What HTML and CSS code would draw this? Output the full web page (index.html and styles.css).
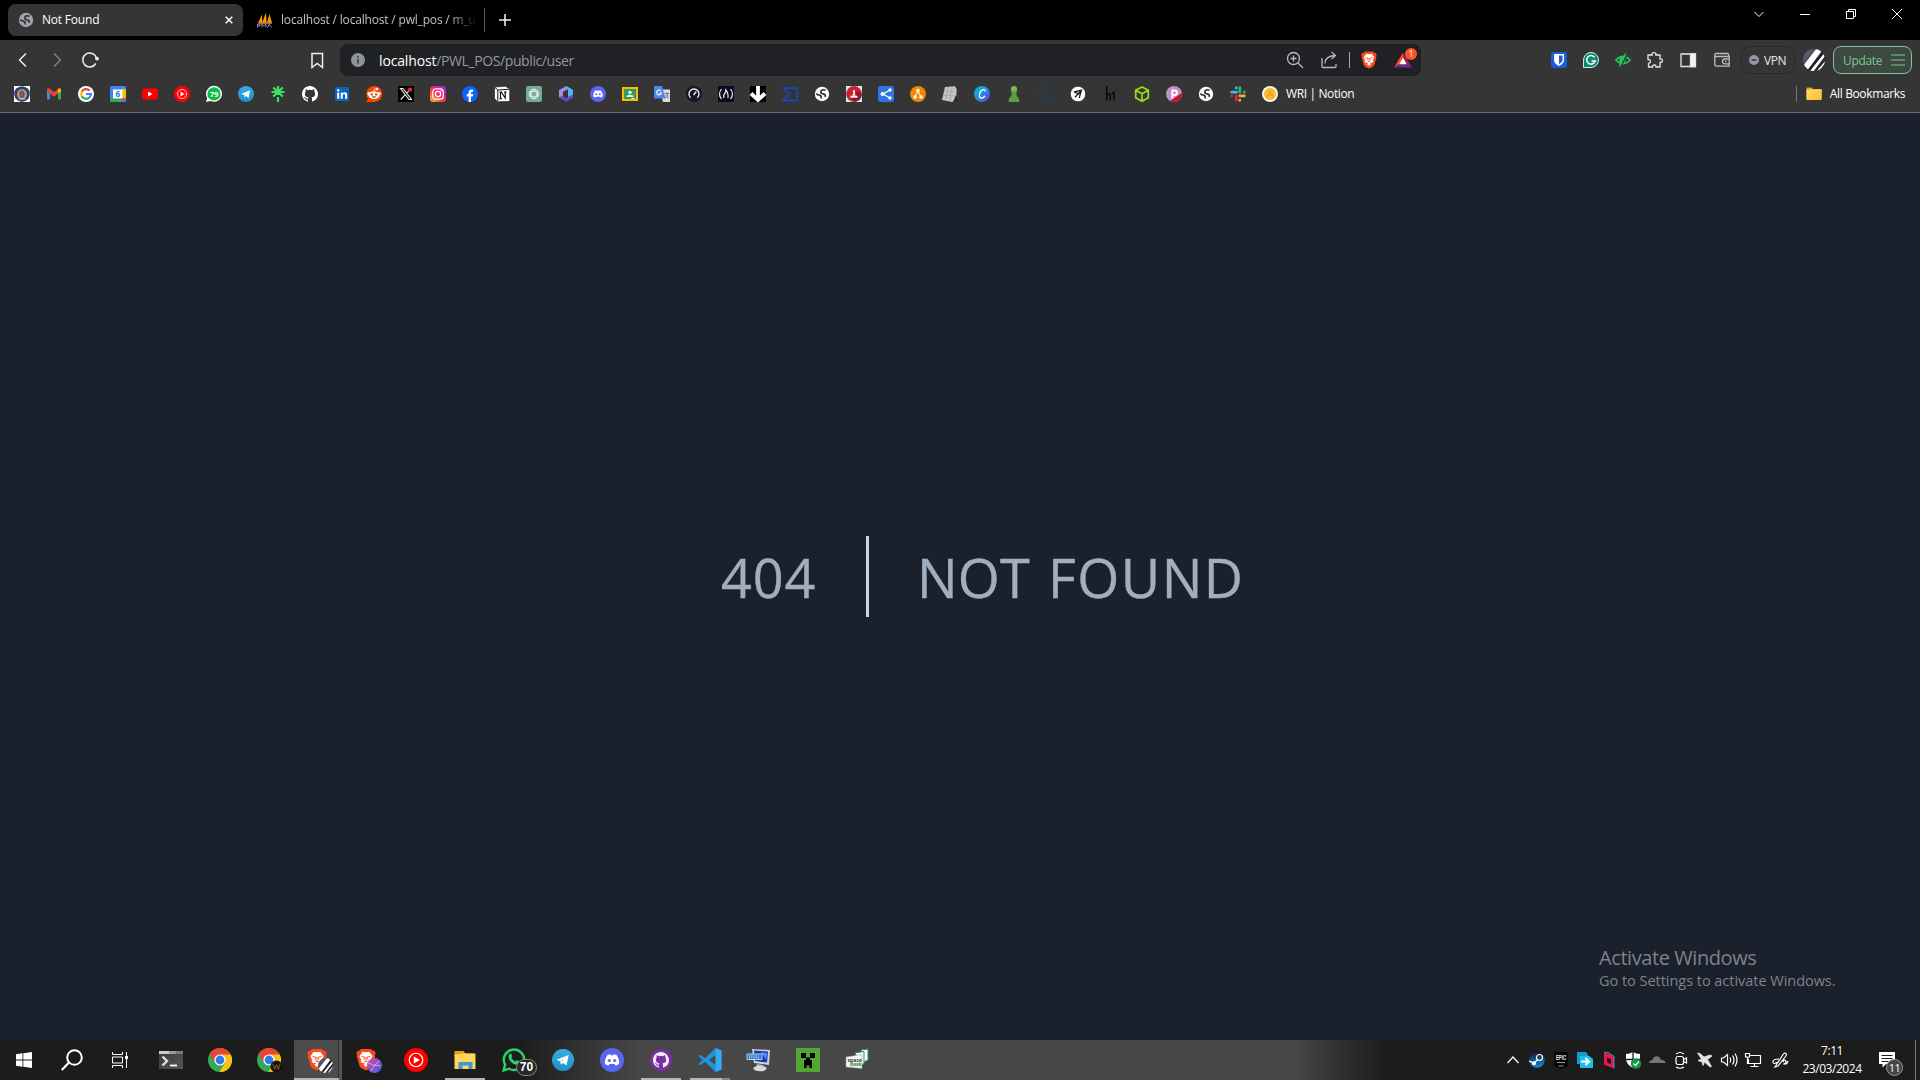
FILE: index.html
```html
<!DOCTYPE html>
<html lang="en">
<head>
<meta charset="utf-8">
<title>Not Found</title>
<link rel="stylesheet" href="styles.css">
</head>
<body>
<svg class="defs" aria-hidden="true">
  <defs>
    <linearGradient id="ig" x1="0" y1="1" x2="1" y2="0"><stop offset="0" stop-color="#fec93a"/><stop offset=".35" stop-color="#f9502f"/><stop offset=".65" stop-color="#e51a98"/><stop offset="1" stop-color="#8a2be8"/></linearGradient>
    <linearGradient id="canva" x1="0" y1="0" x2="1" y2="1"><stop offset="0" stop-color="#00c4cc"/><stop offset=".5" stop-color="#1c8fe0"/><stop offset="1" stop-color="#7d2ae8"/></linearGradient>
    <linearGradient id="folder" x1="0" y1="0" x2="1" y2="1"><stop offset="0" stop-color="#ffdc6b"/><stop offset="1" stop-color="#fbc02d"/></linearGradient>
    <linearGradient id="steam" x1="0" y1="0" x2="0" y2="1"><stop offset="0" stop-color="#101d3a"/><stop offset="1" stop-color="#1a8fd0"/></linearGradient>
    <linearGradient id="tgram" x1="0" y1="0" x2="0" y2="1"><stop offset="0" stop-color="#38aee3"/><stop offset="1" stop-color="#1e8fca"/></linearGradient>
    <linearGradient id="avatar" x1="0" y1="0" x2="1" y2="1"><stop offset="0" stop-color="#6b6f85"/><stop offset="1" stop-color="#101010"/></linearGradient>
    <linearGradient id="orb" x1="0" y1="0" x2="1" y2="1"><stop offset="0" stop-color="#e040a0"/><stop offset="1" stop-color="#3b62e8"/></linearGradient>
    <linearGradient id="term" x1="0" y1="0" x2="1" y2="1"><stop offset="0" stop-color="#3a3a3a"/><stop offset="1" stop-color="#555"/></linearGradient>
  </defs>
  <symbol id="globe" viewBox="0 0 16 16"><circle cx="8" cy="8" r="7.200" fill="currentColor"/><path class="cut" d="M11.500 4.200Q7.200 3.200 6.800 5.300T10.300 8.300Q11.800 9 11 10.800M2.200 7.600Q3.600 9 5.500 9.200T7.300 12.500"/></symbol>
  <symbol id="youtube-music" viewBox="0 0 16 16"><circle cx="8" cy="8" r="8" fill="#f00"/><circle cx="8" cy="8" r="4.500" fill="none" stroke="#fff" stroke-width=".8"/><path d="M6.500 5.600v4.800L10.600 8z" fill="#fff"/></symbol>
  <symbol id="telegram" viewBox="0 0 16 16"><circle cx="8" cy="8" r="8" fill="url(#tgram)"/><path d="M3.200 7.900l8.900-3.600-1.500 7.700-2.600-1.900-1.500 1.400-.5-2.600z" fill="#fff"/><path d="M6 8.900l4-2.900-3.100 3.500-.4 2z" fill="#b5d8ec"/></symbol>
  <symbol id="discord" viewBox="0 0 16 16"><circle cx="8" cy="8" r="8" fill="#5865f2"/><path d="M4.800 4.900c1-.6 1.700-.7 2-.7l.4.6h1.600l.4-.6c.4 0 1.100.1 2 .7 1.300 1.900 1.700 3.900 1.500 5.700-.8.6-1.600.9-2.400 1l-.6-.9H6.300l-.6.900c-.9-.1-1.700-.5-2.400-1-.2-1.800.2-3.700 1.500-5.700z" fill="#fff"/><circle cx="6.200" cy="8.300" r="1.050" fill="#5865f2"/><circle cx="9.800" cy="8.300" r="1.050" fill="#5865f2"/></symbol>
  <symbol id="octocat" viewBox="0 0 16 16"><path fill="currentColor" d="M8 0C3.580 0 0 3.580 0 8c0 3.540 2.290 6.530 5.470 7.590.4.070.55-.17.55-.38 0-.19-.01-.82-.01-1.490-2.010.37-2.530-.49-2.690-.94-.09-.23-.48-.94-.82-1.130-.28-.15-.68-.52-.01-.53.630-.01 1.080.58 1.230.82.720 1.210 1.870.87 2.330.66.070-.52.280-.87.510-1.070-1.780-.2-3.640-.89-3.640-3.950 0-.87.310-1.590.820-2.150-.08-.2-.36-1.020.080-2.120 0 0 .670-.21 2.200.82a7.600 7.600 0 0 1 4 0c1.530-1.040 2.200-.82 2.200-.82.440 1.100.160 1.920.080 2.120.510.560.820 1.270.820 2.150 0 3.070-1.870 3.750-3.650 3.950.290.250.540.730.540 1.480 0 1.070-.01 1.930-.01 2.200 0 .210.150.460.550.380A8 8 0 0 0 8 0z"/></symbol>
  <symbol id="brave" viewBox="0 0 16 18"><path d="M4 .5h8l1.200 1.400 1.300-.1 1.300 2-.7 1.400.3 1.400-2.200 7.300c-.3 1-1 1.600-1.800 2.100L8 17.800l-3.400-1.800c-.8-.5-1.500-1.100-1.800-2.100L.600 6.600l.3-1.400-.7-1.400 1.300-2 1.300.1z" fill="#fb4a1c"/><path d="M8 3.200l2.600-.4 2.700 3.500-1.500 2.800.6 1.300-1.400 1.600-1.600-.5-.3.700 1 1L8 15l-2.100-1.800 1-1-.3-.7-1.600.5-1.400-1.600.6-1.300-1.500-2.800 2.700-3.500z" fill="#fff"/><path d="M4.400 6.500l2.500.6-.4 2M11.600 6.500l-2.500.6.4 2M8 7v3.500M6.800 10.600h2.400" fill="none" stroke="#fb542b" stroke-width=".8"/></symbol>
  <symbol id="chrome" viewBox="0 0 24 24"><circle cx="12" cy="12" r="12" fill="#34a853"/><path d="M12 12L1.600 6A12 12 0 0 1 22.400 6z" fill="#ea4335"/><path d="M12 6.400h10.600A12 12 0 0 1 11.500 24l5.600-9z" fill="#fbc116"/><path d="M1.600 6l5.500 9L12 6.400z" fill="#ea4335"/><circle cx="12" cy="12" r="5.600" fill="#fff"/><circle cx="12" cy="12" r="4.400" fill="#2b7de9"/></symbol>
  <symbol id="stripes" viewBox="0 0 22 22"><clipPath id="disc"><circle cx="11" cy="11" r="11"/></clipPath><g clip-path="url(#disc)"><path fill="url(#avatar)" d="M0 0h22v22H0z"/><path d="M0 17L14-1h7L4 22zM7 23L22 4v3L10 23zM12 24L23 11v2L15 24z" fill="#fff"/><path d="M4 22L20 1h3L8 22z" fill="#222"/><path d="M7 22L23 2v3L10 22z" fill="#fff"/></g></symbol>
</svg>

<div class="desktop">
  <header class="tabstrip">
    <div class="tab tab-active">
      <svg class="i16 muted"><use href="#globe"/></svg>
      <span class="tab-title">Not Found</span>
      <svg class="tab-close" viewBox="0 0 8 8"><path d="M.7.7l6.600 6.600M7.300.7L.7 7.300"/></svg>
    </div>
    <div class="tab tab-idle">
      <svg class="i16" viewBox="0 0 16 16"><path d="M1 11L5 2.500l.3 8.500zM5 11L9 .5l.7 10.500zM10 11l2.500-9 2.500 9z" fill="#f89c0e"/><path d="M.5 10.500h15l-1 1.500H2z" fill="#a96a38"/><path d="M.5 15.500v-3.500h2.500v2H1M5 15.500V12l2 2 2-2v3.500M10.500 15.500l1.800-3.500 2 3.500" fill="none" stroke="#8c90ad" stroke-width="1"/></svg>
      <span class="tab-title">localhost / localhost / pwl_pos / m_u</span>
    </div>
    <span class="tab-sep"></span>
    <svg class="new-tab" viewBox="0 0 12 12"><path d="M6 0v12M0 6h12"/></svg>
    <div class="window-controls">
      <svg class="wc" viewBox="0 0 46 28"><path d="M18.500 12l4.500 4.500 4.500-4.500"/></svg>
      <svg class="wc" viewBox="0 0 46 28"><path d="M18 14.500h10"/></svg>
      <svg class="wc" viewBox="0 0 46 28"><path d="M18.500 11.500h7v7h-7zM20.500 11.500v-2h7v7h-2"/></svg>
      <svg class="wc" viewBox="0 0 46 28"><path d="M18 9l10 10M28 9L18 19"/></svg>
    </div>
  </header>

  <div class="toolbar">
    <div class="nav-buttons">
      <svg class="nav" viewBox="0 0 34 32"><path d="M20 9.500L13.500 16l6.500 6.500"/></svg>
      <svg class="nav dim" viewBox="0 0 34 32"><path d="M14 9.500l6.500 6.500L14 22.500"/></svg>
      <svg class="nav" viewBox="0 0 34 32"><path d="M21.800 19.500A7 7 0 1 1 22.500 14"/><circle cx="23" cy="14.600" r="1.900" fill="#f0f0f0" stroke="none"/></svg>
    </div>
    <svg class="nav bookmark-btn" viewBox="0 0 34 32"><path d="M12 9.500h10.500v14L17.200 19.500 12 23.500z"/></svg>
    <div class="omnibox">
      <svg class="info" viewBox="0 0 14 14"><circle cx="7" cy="7" r="7" fill="#8f9399"/><path d="M7 6v4.500M7 3.200v1.600" stroke="#35373b" stroke-width="1.600"/></svg>
      <p class="url"><b>localhost</b>/PWL_POS/public/user</p>
      <svg class="ob" viewBox="0 0 34 32"><circle cx="15.500" cy="14.500" r="6"/><path d="M15.500 11.500v6M12.500 14.500h6M20 19l5 5"/></svg>
      <svg class="ob" viewBox="0 0 34 32"><path d="M10 14v8.500q0 1 1 1h12q1 0 1-1V20M13 19.500q0-7.500 10-8M19.500 8l4 3.500-4 3.500"/></svg>
      <span class="ob-sep"></span>
      <svg class="ob-brave"><use href="#brave"/></svg>
      <div class="bat">
        <svg viewBox="0 0 18 16"><path d="M9 .5L0 15.500l6-3.500 3-6z" fill="#ff4724"/><path d="M0 15.500h18L12.500 12H6z" fill="#662d91"/><path d="M9 .5l9 15-5.500-3.500L9 6z" fill="#9e1f63"/><path d="M9 5.500l3.800 6.800H5.200z" fill="#fff"/></svg>
        <span class="bat-badge">1</span>
      </div>
    </div>
    <div class="extensions">
      <svg class="i16" viewBox="0 0 16 16"><rect width="16" height="16" rx="2" fill="#175ddc"/><path d="M3 2h10v6q0 3.500-5 6-5-2.500-5-6z" fill="#fff"/><path d="M8 3.500h3.600V8q0 2.200-3.600 4.300z" fill="#175ddc"/></svg>
      <svg class="i16" viewBox="0 0 16 16"><path d="M.5 15.500V8a7.500 7.500 0 1 1 7.500 7.500z" fill="#0b8a73" stroke="#d7e6e2"/><path d="M11.500 5.200A4.300 4.300 0 1 0 12.200 9H8.500" fill="none" stroke="#fff" stroke-width="1.500"/></svg>
      <svg class="i16" viewBox="0 0 16 16"><path d="M.8 8Q8 .5 15.200 8 8 15.500.8 8z" fill="#353535" stroke="#1fc95b" stroke-width="1.500"/><circle cx="7.500" cy="8" r="3.200" fill="#1fc95b"/><path d="M12 2L6 14.500" stroke="#353535" stroke-width="1.500"/><path d="M10.800 1.500L4.300 14.500" stroke="#1fc95b" stroke-width="1.500"/></svg>
      <svg class="i16 line" viewBox="0 0 16 16"><path d="M1 3h4.200q-.7-2.400 1.800-2.400T8.800 3H13v4q2.400-.4 2.400 1.700T13 10.400v4.600H9q.3-2-1.700-2t-1.700 2H1.500v-3.700q2-.2 2-1.900T1 7.400z"/></svg>
      <svg class="i16 line panel-icon" viewBox="0 0 16 16"><path d="M1 2h14v12.500H1z"/><path d="M10.500 2h5v12.500h-5z" fill="#f4f4f4"/></svg>
      <svg class="i16 line wallet-icon" viewBox="0 0 16 16"><path d="M14.500 5V2.500q0-1-1-1H2Q.8 1.500.8 3T2 4.500h13.200v9.700H2.500Q.8 14.200.8 12V3M15.200 7h-4.500q-2.200 0-2.200 2.400t2.200 2.400h4.500M11 9.500h1.500"/></svg>
      <span class="vpn"><i></i>VPN</span>
      <svg class="avatar"><use href="#stripes"/></svg>
      <span class="update">Update<svg viewBox="0 0 14 12"><path d="M0 1h14M0 6h14M0 11h14"/></svg></span>
    </div>
  </div>

  <nav class="bookmarks">
    <svg class="i16" viewBox="0 0 16 16"><path fill="#fff" d="M0 0h16v16H0z"/><path d="M8 .2l3 .8 3 1.400 1.800 3.300-.2 3.500-1 3-2.600 2.600L8 16l-4-1.200-2.600-2.600-1-3-.2-3.500L2 2.400 5 1z" fill="#29417e"/><circle cx="8" cy="8.200" r="5" fill="#d59a48"/><path d="M8 4l2.800 3-.8 4.500H6L5.200 7z" fill="#35589c"/><path d="M8 5.500l1 3-1 2.500-1-2.500z" fill="#e7542b"/><path d="M4.500 13h7" stroke="#e9d7b0"/></svg>
    <svg class="i16" viewBox="0 0 16 16"><path d="M1 3.500v10h3V7.700z" fill="#4285f4"/><path d="M15 3.500v10h-3V7.700z" fill="#34a853"/><path d="M1 3.500Q2 1.500 4 3l4 3.300L12 3v4.500L8 10.700l-4-3.200-3-2z" fill="#ea4335"/><path d="M12 3q2-1.500 3 .500v2l-3 2z" fill="#fbbc04"/></svg>
    <svg class="i16" viewBox="0 0 16 16"><circle cx="8" cy="8" r="8" fill="#fff"/><g fill="none" stroke-width="2.200"><path d="M11.600 4.600A5 5 0 0 0 3.700 5.700" stroke="#ea4335"/><path d="M3.700 5.700a5 5 0 0 0 0 4.600" stroke="#fbbc04"/><path d="M3.700 10.300a5 5 0 0 0 7.600 1.300" stroke="#34a853"/><path d="M11.300 11.600A5 5 0 0 0 13 8H8" stroke="#4285f4"/></g></svg>
    <svg class="i16" viewBox="0 0 16 16"><rect width="16" height="16" rx="1.500" fill="#4285f4"/><path d="M12 3h4v9h-4z" fill="#fbbc04"/><path d="M0 12.500h12V16H1.500Q0 16 0 14.500z" fill="#34a853"/><path d="M12 12h4l-4 4z" fill="#ea4335"/><path d="M3 3.500h9.500v9H3z" fill="#fff"/><text x="7.800" y="11.300" class="g-cal">6</text></svg>
    <svg class="i16" viewBox="0 0 16 16"><rect y="2.500" width="16" height="11" rx="2.800" fill="#f00"/><path d="M6.200 5.600v4.800L10.500 8z" fill="#fff"/></svg>
    <svg class="i16"><use href="#youtube-music"/></svg>
    <svg class="i16" viewBox="0 0 16 16"><path d="M0 16l1.200-4A8 8 0 1 1 4.500 15z" fill="#fff"/><circle cx="8" cy="7.900" r="6.600" fill="#0cbc46"/><text x="8" y="10.700" class="g-wa">79</text></svg>
    <svg class="i16"><use href="#telegram"/></svg>
    <svg class="i16" viewBox="0 0 16 16"><path d="M8 0v9M1.500 6h13M3.300 1.500l9.400 9M12.700 1.500l-9.400 9M8 11v5" stroke="#3fe25c" stroke-width="2.200"/></svg>
    <svg class="i16 white"><use href="#octocat"/></svg>
    <svg class="i16" viewBox="0 0 16 16"><rect x="1" y="1" width="14" height="14" rx=".5" fill="#0a66c2"/><path d="M3.200 6.500h2v6.300h-2zM6.700 6.500h2v.9q.8-1.100 2.200-1.100 2.200 0 2.200 2.800v3.700h-2V9.500q0-1.500-1-1.500-1.400 0-1.400 1.700v3.100h-2z" fill="#fff"/><circle cx="4.200" cy="4.300" r="1.200" fill="#fff"/></svg>
    <svg class="i16" viewBox="0 0 16 16"><path d="M0 16l2-3a8 8 0 1 1 6 3z" fill="#ff4500"/><ellipse cx="8" cy="9.200" rx="5.400" ry="3.900" fill="#fff"/><circle cx="2.900" cy="7.600" r="1.500" fill="#fff"/><circle cx="13.100" cy="7.600" r="1.500" fill="#fff"/><circle cx="11" cy="3" r="1.200" fill="#fff"/><path d="M8 5.500L8.600 3h2" stroke="#fff" fill="none" stroke-width=".8"/><circle cx="5.800" cy="8.500" r="1.200" fill="#ff4500"/><circle cx="10.200" cy="8.500" r="1.200" fill="#ff4500"/><path d="M5.500 10.600q2.500 2.200 5 0z" fill="#222"/></svg>
    <svg class="i16" viewBox="0 0 16 16"><path d="M0 0h16v16H0z"/><path d="M2.500 2.500H5l8.500 11H11zM13 2.500L8.800 7.200M7.200 8.900l-4.500 4.600" fill="none" stroke="#eee" stroke-width="1.100"/><circle cx="12" cy="3.600" r="2.200" fill="#f31d2d"/></svg>
    <svg class="i16" viewBox="0 0 16 16"><rect width="16" height="16" rx="3.500" fill="url(#ig)"/><rect x="2.800" y="2.800" width="10.400" height="10.400" rx="3" fill="none" stroke="#fff" stroke-width="1.200"/><circle cx="8" cy="8" r="2.600" fill="none" stroke="#fff" stroke-width="1.200"/><circle cx="11" cy="5" r=".7" fill="#fff"/></svg>
    <svg class="i16" viewBox="0 0 16 16"><circle cx="8" cy="8" r="8" fill="#0866ff"/><path d="M6.600 16v-5.500H4.800V8h1.800V6.700q0-3.300 3.100-3.300l1.500.2v2.100h-1q-1.200 0-1.200 1.200V8h2.200l-.4 2.500H9V16z" fill="#fff"/></svg>
    <svg class="i16" viewBox="0 0 16 16"><path d="M.5 1l11-.7 4.200 2.700v11.500l-1 1-11.200.3L.5 12.500z" fill="#fff" stroke="#111" stroke-width=".6"/><path d="M3.800 4l11.200-.7M3.800 4v11M1 1.500L3.800 4" stroke="#111" fill="none"/><path d="M5.500 6h1.800l3.900 6V6.200M10 6h2.800M6.500 6v6.600M5.500 12.700h2.300M11.200 6v6.500" stroke="#111" stroke-width="1.200" fill="none"/></svg>
    <svg class="i16" viewBox="0 0 16 16"><rect width="16" height="16" rx="2" fill="#74aa9c"/><g fill="none" stroke="#fff" stroke-width=".7"><rect x="3" y="5.300" width="10" height="5.400" rx="2.700"/><rect x="3" y="5.300" width="10" height="5.400" rx="2.700" transform="rotate(60 8 8)"/><rect x="3" y="5.300" width="10" height="5.400" rx="2.700" transform="rotate(120 8 8)"/></g></svg>
    <svg class="i16" viewBox="0 0 16 16"><path d="M8.500 0L1 4v7l4 2.500V6L10 3.200z" fill="#a78be8"/><path d="M8.500 0L15 4v6l-5 2V5L6.500 3.500z" fill="#52b4e8"/><path d="M1 11l7 4.800 7-4V8.500L8.500 12 5 10z" fill="#5a4fc8"/><path d="M5 6l5-2.500V10l-3.300 1.500L5 10z" fill="#353535"/></svg>
    <svg class="i16"><use href="#discord"/></svg>
    <svg class="i16" viewBox="0 0 16 16"><path d="M0 1h16v14H0z" fill="#fbbc04"/><path d="M2 3h12v10H2z" fill="#2f9e5b"/><circle cx="8" cy="6.300" r="1.600" fill="#fff"/><path d="M4.500 11q0-2.300 3.500-2.300t3.500 2.300zM9.500 13h3v-1h-3z" fill="#e8f5ec"/></svg>
    <svg class="i16" viewBox="0 0 16 16"><path d="M6 3.500h10V16H9z" fill="#d8dade"/><path d="M0 0h8l3.500 12.500H1Q0 12.500 0 11.500z" fill="#4a87ee"/><path d="M6.800 4.800A2.400 2.400 0 1 0 7.400 7H5.200" fill="none" stroke="#fff" stroke-width="1.100"/><path d="M10.500 7.500h4.500M12.500 6.300v1.200M14 7.500q-.8 3-3 4.500M11.800 9q1 2 3 3" fill="none" stroke="#68717d" stroke-width=".9"/></svg>
    <svg class="i16" viewBox="0 0 16 16"><circle cx="8" cy="8" r="8" fill="#141526"/><path d="M4.700 11.800a5 5 0 1 1 6.600 0M7.500 9l2.800-3.500" fill="none" stroke="#eee" stroke-width="1.400"/></svg>
    <svg class="i16" viewBox="0 0 16 16"><path d="M0 0h16v16H0z" fill="#0a0a23"/><path d="M3.500 3q-4 5 0 10M12.500 3q4 5 0 10M6 12q-1-3 1-5 1-1.200.8-3 2.700 3 2.200 8" fill="none" stroke="#e8e8ef" stroke-width="1.200"/></svg>
    <svg class="i16" viewBox="0 0 16 16"><path d="M0 0h16v16H0z"/><path d="M8 0v12M1 7.500l7 6.500 7-6.500" stroke="#fff" stroke-width="3.800" fill="none"/></svg>
    <svg class="i16" viewBox="0 0 16 16"><path d="M1 2h14v12.500H1L7.500 8.200z" fill="none" stroke="#0b4ddb" stroke-width="1.300"/></svg>
    <svg class="i16 white"><use href="#globe"/></svg>
    <svg class="i16" viewBox="0 0 16 16"><path d="M0 0h16v16H0z" fill="#c9f0ee"/><circle cx="8" cy="8" r="7.900" fill="#cf2032"/><path d="M5 12l3.500 3.800Q15 15 15.800 8.500L12 5z" fill="#941523"/><path d="M7.200 4h1.600v3.500l.7 2h-3l.7-2zM4.500 9.800h7v1.900h-7z" fill="#fff"/></svg>
    <svg class="i16" viewBox="0 0 16 16"><rect width="16" height="16" rx="2.500" fill="#2f74e8"/><path d="M12 4L5 8l7 4" fill="none" stroke="#fff" stroke-width="1.200"/><circle cx="4.500" cy="8" r="2" fill="#fff"/><circle cx="12" cy="4" r="1.700" fill="#fff"/><circle cx="12" cy="12" r="1.700" fill="#fff"/></svg>
    <svg class="i16" viewBox="0 0 16 16"><circle cx="8" cy="8" r="8" fill="#f08705"/><path d="M8 5l-3 6M8 5l3 6" stroke="#fff" stroke-width="1"/><path d="M6.500 3h3v3h-3zM3.500 9.500h3v3h-3zM9.500 9.500h3v3h-3z" fill="#fff"/></svg>
    <svg class="i16" viewBox="0 0 16 16"><path d="M3 1l12-1-1 14-4 2-10-2z" fill="#c4c4c4"/><path d="M2 5l12 1M1 9l12 1M6 1L4 14M10 1L8 15" stroke="#a2a2a2" stroke-width=".7"/><path d="M13 0h3v5zM14 9l2 6-5 1z" fill="#292929"/></svg>
    <svg class="i16" viewBox="0 0 16 16"><circle cx="8" cy="8" r="8" fill="url(#canva)"/><path d="M11.200 5.500q.3-2-1.700-1.800Q6.300 4.200 5.500 8.300q-.4 3.700 2 3.900 2 0 3.400-2.300" fill="none" stroke="#fff" stroke-width="1.300"/></svg>
    <svg class="i16" viewBox="0 0 16 16"><circle cx="8" cy="3.200" r="3.100" fill="#81b64c"/><path d="M4.500 5.500h7v1.300H10q.2 3 2.500 5 1 1.200.8 4.200H2.700q-.2-3 .8-4.200 2.300-2 2.500-5H4.500z" fill="#5d9948"/></svg>
    <svg class="i16" viewBox="0 0 16 16"><path d="M.7 1.500h9.600v13H.700zM7.500 5.500Q6.800 5 6 5 4 5 4 8t2 3q.8 0 1.500-.5M12 14.500h4" fill="none" stroke="#1f4054" stroke-width="1.200"/></svg>
    <svg class="i16" viewBox="0 0 16 16"><circle cx="8" cy="8" r="7.700" fill="#fff" stroke="#111" stroke-width=".6"/><path d="M4 6l7.500-1.800-2.300 7.800M11.500 4.200l-6.500 7M4.500 6.200l5 2" fill="none" stroke="#222" stroke-width="1.300"/></svg>
    <svg class="i16" viewBox="0 0 16 16"><path d="M4.700 0v14.500M5 8.500q3.200-2 3.200 1.500v4.500M9.500 8l2.500-2v8.500" fill="none" stroke="#080808" stroke-width="1.500"/></svg>
    <svg class="i16" viewBox="0 0 16 16"><path d="M8 1l6.300 3.300v7.400L8 15.200l-6.300-3.500V4.300zM1.700 4.300L8 7.800l6.300-3.500M8 7.800v7.400" fill="none" stroke="#9be018" stroke-width="1.700"/></svg>
    <svg class="i16" viewBox="0 0 16 16"><circle cx="8" cy="8" r="8" fill="#c48fc4"/><path d="M15.800 7A8 8 0 0 1 4 15z" fill="#c8102e"/><path d="M6.300 12.500v-8h2.200q2.500 0 2.500 2.300T8.500 9.200H6.300" fill="none" stroke="#fff" stroke-width="1.900"/></svg>
    <svg class="i16 white"><use href="#globe"/></svg>
    <svg class="i16" viewBox="0 0 16 16"><g fill="none" stroke-width="2.800" stroke-linecap="round"><path d="M1.800 6.200h4.600M6.300 1.800v.3" stroke="#36c5f0"/><path d="M9.800 1.700v4.500M14.200 6.200h.1" stroke="#2eb67d"/><path d="M9.800 9.800h4.600M9.800 14.200v.1" stroke="#ecb22e"/><path d="M6.300 9.800v4.500M1.700 9.800h.2" stroke="#e01e5a"/></g></svg>
    <a class="bookmark-label"><svg class="i16" viewBox="0 0 16 16"><circle cx="8" cy="8" r="8" fill="#fff4dc"/><circle cx="8" cy="8" r="6" fill="#f6b93b"/><path d="M5 11l3-6 3 6M6 9h4" stroke="#e59d1b" fill="none"/></svg>WRI | Notion</a>
    <span class="bm-sep"></span>
    <a class="bookmark-label all"><svg class="i16" viewBox="0 0 16 16"><path d="M.5 2.500q0-1 1-1h4L7 3h8q1 0 1 1v1H.500z" fill="#e8a31c"/><rect x=".3" y="3.500" width="15.500" height="10.500" rx="1" fill="url(#folder)"/></svg>All Bookmarks</a>
  </nav>

  <main class="page">
    <div class="error">
      <span class="code">404</span>
      <span class="message"><span class="first">Not</span> Found</span>
    </div>
    <div class="watermark"><h2>Activate Windows</h2><p>Go to Settings to activate Windows.</p></div>
  </main>

  <footer class="taskbar">
    <div class="apps">
      <span class="slot sys"><svg class="i16" viewBox="0 0 16 16"><path d="M0 2.300L6.500 1.300v6.300H0zM7.300 1.200L16 0v7.600H7.300zM0 8.400h6.500v6.300L0 13.700zM7.300 8.400H16V16l-8.700-1.200z" fill="#fff"/></svg></span>
      <span class="slot sys"><svg class="i22" viewBox="0 0 22 22"><circle cx="13.500" cy="8.500" r="7.300" fill="none" stroke="#fff" stroke-width="2"/><path d="M8 13.500L.8 21" stroke="#fff" stroke-width="2.200"/></svg></span>
      <span class="slot sys wide"><svg class="i16" viewBox="0 0 16 16"><path d="M.5 0v2.500h10V0M.5 16v-2.500h10V16M.5 5h10v6H.500zM14.500 0v16" fill="none" stroke="#fff"/><path d="M13 4h3v3h-3z" fill="#fff"/></svg></span>
      <span class="slot"><svg class="i24" viewBox="0 0 24 24"><path d="M0 3h24v18H0z" fill="url(#term)"/><path d="M0 3h10v3H0z" fill="#ccc"/><path d="M10 3h7v3h-7z" fill="#999"/><path d="M17 3h7v3h-7z" fill="#777"/><path d="M3.500 8.500L8 13l-4.500 4.500" stroke="#ddd" stroke-width="2.400" fill="none"/><path d="M11 17.500h7" stroke="#fff" stroke-width="1.800"/></svg></span>
      <span class="slot"><svg class="i24"><use href="#chrome"/></svg></span>
      <span class="slot"><svg class="i24"><use href="#chrome"/></svg><svg class="mini" viewBox="0 0 14 14"><circle cx="7" cy="7" r="6.500" fill="#17130a"/><path d="M3 4l2 6 2-5 2 5 2-6" fill="none" stroke="#8a6a22"/></svg></span>
      <span class="slot active run stacked"><svg class="lion"><use href="#brave"/></svg><svg class="mini big"><use href="#stripes"/></svg></span>
      <span class="slot"><svg class="lion"><use href="#brave"/></svg><svg class="mini big" viewBox="0 0 16 16"><circle cx="8" cy="8" r="8" fill="url(#orb)"/><path d="M1 5q6 4 13 3M4 14q3-6 9-11" fill="none" stroke="#f1b9e8" stroke-width=".8"/></svg></span>
      <span class="slot"><svg class="i24"><use href="#youtube-music"/></svg></span>
      <span class="slot run"><svg class="i24" viewBox="0 0 24 24"><path d="M1.500 3h9l2 2.500H20V9H1.500z" fill="#e5a50a"/><path d="M1.500 6.500l10-1h11V21h-21z" fill="#ffd55c"/><path d="M5.500 21v-7h14v7h-4v-3.500h-6V21z" fill="#3c99d8"/></svg></span>
      <span class="slot"><svg class="i24 wa" viewBox="0 0 24 24"><path d="M1.500 22.500l1.600-5.800a10.200 10.200 0 1 1 4 4z" fill="none" stroke="#25d366" stroke-width="2.400"/><path d="M7.500 6q1-1 1.800 0l1 2.300-1 1.500q1.500 2.800 4.200 3.800l1.300-1.500 2.800 1.400q.2 2-2 3-3.500.8-6.900-2.800Q5 9.500 7.500 6z" fill="#25d366"/></svg><span class="count">70</span></span>
      <span class="slot"><svg class="i22"><use href="#telegram"/></svg></span>
      <span class="slot"><svg class="i24"><use href="#discord"/></svg></span>
      <span class="slot run"><span class="gh"><svg><use href="#octocat"/></svg></span></span>
      <span class="slot run stacked"><svg class="i24" viewBox="0 0 24 24"><path d="M17.500 0L7 10.200 2.500 6.700.500 8l4 4-4 4 2 1.300L7 13.800 17.500 24l6-2.500V2.500zM17.800 6.800v10.400L11 12z" fill="#1f93dc" fill-rule="evenodd"/><path d="M17.500 0l6 2.500v19l-6 2.500z" fill="#31acf5"/></svg></span>
      <span class="slot"><svg class="i24" viewBox="0 0 24 24"><path d="M5 1l18 1-1 15-15-2z" fill="#cfd3da"/><path d="M7 2.500l14 1-1 11-12-1.500z" fill="#1835b8"/><path d="M14 4l6 1-1 7z" fill="#5c87f2"/><path d="M10 16l6 1v3H9z" fill="#bbb"/><ellipse cx="13" cy="20.500" rx="6.500" ry="2.700" fill="#d9d9d9"/><path d="M0 6h15v5.500H0z" fill="#2a78c8" stroke="#e0ebf5" stroke-width=".8"/><path d="M2 8h11M2 9.800h11" stroke="#cfe5fa" stroke-dasharray="1.200 1"/></svg></span>
      <span class="slot"><svg class="i24" viewBox="0 0 24 24"><path d="M0 0h24v24H0z" fill="#52a535"/><path d="M5 5h5v5H5zM14 5h5v5h-5zM10 9.500h4V12h2v8h-2.500v-2.500h-3V20H8v-8h2z"/></svg></span>
      <span class="slot"><svg class="i24" viewBox="0 0 24 24"><path d="M16 2l7-1v11l-4 2z" fill="#fff" stroke="#3b8c4b"/><path d="M10 5l9-1.500v12l-4 2z" fill="#fff" stroke="#3b8c4b"/><path d="M1 9l16-2.500v14L1 19z" fill="#f4f4f4" stroke="#999" stroke-width=".5"/><text x="2.500" y="13.500" class="g-sd">space</text><text x="5" y="18" class="g-sd green">desk</text></svg></span>
    </div>
    <div class="tray">
      <svg class="t" viewBox="0 0 24 24"><path d="M6.500 15l5.500-6 5.500 6" class="w"/></svg>
      <svg class="t" viewBox="0 0 24 24"><circle cx="12" cy="12" r="7.800" fill="url(#steam)"/><circle cx="14.500" cy="9.500" r="3" class="w"/><path d="M4 13l5 2 4-3.500" class="w"/><circle cx="9" cy="15.300" r="2" fill="#fff"/></svg>
      <svg class="t" viewBox="0 0 24 24"><path d="M5 4h14v14l-7 3-7-3z" fill="#070707"/><text x="12" y="12" class="g-epic" textLength="10" lengthAdjust="spacingAndGlyphs">EPIC</text><path d="M8 14.500h8M9.500 18h5" stroke="#999"/></svg>
      <svg class="t" viewBox="0 0 24 24"><path d="M4 4h9l2 3v9H4z" fill="#0d9bd2"/><path d="M7 8h9l4 3v9H7z" fill="#17c1e8"/><path d="M8 13.500h7M12.500 10l3.500 3.500-3.500 3.500" stroke="#fff" stroke-width="2.200" fill="none"/></svg>
      <svg class="t" viewBox="0 0 24 24"><path d="M7 4l10 4v12.500L7 16.500z" fill="#f0144c"/><path d="M7 4.300h4l6 4.200v12" fill="none" stroke="#18a9d8"/><path d="M10 9.500l4 1.700v5L10 14.500z" fill="#1b1b1b"/></svg>
      <svg class="t" viewBox="0 0 24 24"><path d="M12 4q3 2 7 2v5q0 5-7 9-7-4-7-9V6q4 0 7-2z" fill="#fff"/><path d="M12 4v16M5 11.500h14" stroke="#1c1c1c" stroke-width="1.300"/><circle cx="15" cy="15.500" r="5.200" fill="#14964a"/><path d="M12.500 15.500l2 2 3.300-4" class="w"/></svg>
      <svg class="t" viewBox="0 0 24 24"><path d="M4 15q.3-3 3.500-3 1.500-4.500 5.500-3.500 2.500.8 3 3.500 4.500-.2 4.500 3z" fill="#76777a"/></svg>
      <svg class="t" viewBox="0 0 24 24"><rect x="7" y="8.500" width="7.500" height="8" rx="2" class="w"/><path d="M14.500 11.500l3-1.500v5l-3-1.500M7 6q4-3 8 0M7 19q4 2.500 8 0" class="w"/></svg>
      <svg class="t" viewBox="0 0 24 24"><path d="M4.500 5l2.500.5 4 3.500 6-2 2 1-4.500 3.500 4 7-1.500.5-5.500-5-1.500 3.500-1-3.500-4-1.500 3.500-1.500z" fill="#e4e4e4" stroke="#e4e4e4" stroke-width=".8"/></svg>
      <svg class="t" viewBox="0 0 24 24"><path d="M4.500 10h2l4-3.500v11l-4-3.500h-2zM13 9.500q1.500 2.500 0 5M15.500 7.500q3 4.500 0 9M18 5.500q4 6.500 0 13" class="w"/></svg>
      <svg class="t" viewBox="0 0 24 24"><path d="M9 7.500h10.500v8H7.500V11M13.500 15.500v3M9.500 18.500h8M4.500 5.500h4V9h-4zM6.500 9v7" class="w"/></svg>
      <svg class="t pen" viewBox="0 0 24 24"><path d="M6 19L14 6.500q1.500-2 2.800-1t-.3 3L9 18zM10 11q-6 0-6 3t5 0M14 14q1-3 2.500-1.500T15 16q3 .5 4-3" class="w"/></svg>
      <div class="clock"><span>7:11</span><span>23/03/2024</span></div>
      <div class="notif"><svg viewBox="0 0 16 16"><path d="M0 0h16v12H7l-3.500 3.500V12H0z" fill="#fff"/><path d="M2.500 3.500h11M2.500 6.500h11M2.500 9.500h7" stroke="#1c1c1c"/></svg><span class="count-sm">11</span></div>
      <span class="peek"></span>
    </div>
  </footer>
</div>
</body>
</html>
```
FILE: styles.css
```css
* { box-sizing: border-box; }
body {
  margin: 0;
  background: #1a202c;
  color: #fff;
  font-family: "Open Sans", "Noto Sans", sans-serif;
  overflow: hidden;
}
.defs { position: absolute; width: 0; height: 0; }
svg { display: block; flex: none; overflow: visible; }
.desktop { width: 1920px; height: 1080px; display: flex; flex-direction: column; }
.i16 { width: 16px; height: 16px; }
.i22 { width: 22px; height: 22px; }
.i24 { width: 24px; height: 24px; }
.white { color: #fff; }
.muted { color: #a0a4aa; }
.cut { fill: none; stroke: #353535; stroke-width: 1.7; }

/* tab strip */
.tabstrip { height: 40px; background: #000; display: flex; align-items: center; font-size: 12px; }
.tab { display: flex; align-items: center; height: 32px; line-height: 16px; }
.tab-active { width: 235px; margin-left: 8px; padding: 0 10px; border-radius: 8px; background: #353535; gap: 8px; }
.tab-active .tab-title { flex: 1; letter-spacing: -0.2px; }
.tab-close { width: 8px; height: 8px; stroke: #fff; stroke-width: 1.5; }
.tab-idle { width: 241px; padding-left: 14px; gap: 8px; color: #c2c2c2; }
.tab-idle .tab-title {
  width: 196px;
  white-space: nowrap;
  letter-spacing: -0.18px;
  -webkit-mask-image: linear-gradient(90deg, #000 86%, transparent);
  mask-image: linear-gradient(90deg, #000 86%, transparent);
}
.tab-sep { width: 1px; height: 24px; background: #555; }
.new-tab { width: 12px; height: 12px; margin-left: 14px; stroke: #eee; stroke-width: 1.6; }
.window-controls { display: flex; align-self: flex-start; margin-left: auto; }
.wc { width: 46px; height: 28px; fill: none; stroke: #fff; }

/* toolbar */
.toolbar { height: 40px; background: #353535; display: flex; align-items: center; padding-left: 6px; }
.nav-buttons { display: flex; width: 294px; }
.nav { width: 34px; height: 32px; fill: none; stroke: #f0f0f0; stroke-width: 1.5; }
.dim { stroke: #808080; }
.bookmark-btn { margin-right: 6px; }
.omnibox { width: 1081px; height: 32px; border-radius: 8px; background: #202124; display: flex; align-items: center; padding-left: 11px; }
.info { width: 14px; height: 14px; }
.url { flex: 1; margin: 0 0 0 14px; font-size: 14px; color: #95989d; letter-spacing: -0.4px; }
.url b { font-weight: 400; color: #fff; letter-spacing: -0.15px; }
.ob { width: 34px; height: 32px; fill: none; stroke: #b8b8b8; stroke-width: 1.3; }
.ob-sep { width: 1px; height: 16px; margin: 0 11px 0 3px; background: #aaa; }
.ob-brave { width: 16px; height: 18px; }
.bat { position: relative; width: 44px; padding-left: 17px; }
.bat svg { width: 18px; height: 16px; }
.bat-badge { position: absolute; left: 28px; top: -4px; width: 12px; height: 12px; border-radius: 6px; background: #fb542b; font-size: 9px; line-height: 12px; text-align: center; }
.extensions { display: flex; align-items: center; gap: 16px; margin-left: 130px; }
.line { fill: none; stroke: #e6e6e6; stroke-width: 1.3; }
.panel-icon { margin-left: 1px; }
.wallet-icon { margin-left: 2px; stroke: #bbb; }
.vpn { display: flex; align-items: center; gap: 5px; width: 54px; height: 28px; margin-left: -5px; padding-left: 7px; border: 1px solid #282828; border-radius: 8px; font-size: 12px; letter-spacing: -0.4px; color: #e8e8e8; }
.vpn i { width: 10px; height: 10px; border: 4px solid #9395a8; border-width: 4px 2px; border-radius: 5px; background: #444; }
.avatar { width: 22px; height: 22px; margin-left: -8px; }
.update { display: flex; align-items: center; gap: 9px; width: 79px; height: 28px; margin-left: -8px; padding-left: 9px; border: 1px solid #7fc79a; border-radius: 8px; background: #3d4841; color: #72cb91; font-size: 12px; letter-spacing: -0.35px; }
.update svg { width: 14px; height: 12px; stroke: #72cb91; stroke-width: 1; }

/* bookmarks */
.bookmarks { height: 33px; background: #353535; border-bottom: 1px solid #6c6c6c; display: flex; align-items: center; gap: 16px; padding: 0 15px 4px 14px; font-size: 12px; }
.bookmark-label { display: flex; align-items: center; gap: 8px; height: 16px; line-height: 16px; white-space: nowrap; letter-spacing: -0.37px; }
.bm-sep { width: 1px; height: 16px; margin-left: auto; background: #777; }
.all { margin-left: -7px; }
.g-cal { font: 700 8px "Open Sans", sans-serif; fill: #1a73e8; text-anchor: middle; }
.g-wa { font: 700 7.5px "Open Sans", sans-serif; fill: #fff; text-anchor: middle; }

/* page */
.page { flex: 1; display: flex; flex-direction: column; position: relative; }
.error { display: flex; align-items: center; margin: 423px 0 0 673px; height: 81px; color: #a0aec0; font-size: 54px; line-height: 81px; text-transform: uppercase; white-space: nowrap; -webkit-text-stroke: 0.4px #a0aec0; }
.code { width: 196px; height: 81px; padding: 1px 0 0 48px; border-right: 3px solid #cbd5e0; letter-spacing: 0.9px; }
.message { height: 81px; padding: 1px 0 0 48px; letter-spacing: 1.5px; word-spacing: 2.4px; }
.first { letter-spacing: 0.2px; }
.watermark { position: absolute; left: 1599px; top: 831px; color: #7f8389; white-space: nowrap; }
.watermark h2 { margin: 0; font-size: 20px; font-weight: 400; line-height: 27px; letter-spacing: -0.42px; }
.watermark p { margin: 0; font-size: 14.5px; line-height: 19px; letter-spacing: -0.03px; }

/* taskbar */
.taskbar { height: 40px; display: flex; justify-content: space-between; background: linear-gradient(90deg, #1c1c1c 520px, #474747 640px, #474747 1295px, #2c2c2c 1348px, #1c1c1c 1390px); }
.apps, .tray { display: flex; }
.slot { position: relative; width: 48px; height: 40px; margin-right: 1px; display: flex; align-items: center; justify-content: center; }
.sys { margin-right: 0; }
.wide { margin-right: 3px; }
.active { background: #4c4c4c; }
.run::after { content: ""; position: absolute; left: 4px; bottom: 0; width: 40px; height: 2px; background: #b6b6b6; }
.active::after { left: 0; width: 45px; }
.stacked::before { content: ""; position: absolute; right: 0; bottom: 0; width: 3px; height: 2px; background: #888; }
.stacked:not(.active)::after { width: 32px; }
.stacked:not(.active)::before { right: 4px; width: 8px; }
.active.stacked::before { height: 40px; border-left: 1px solid #2f2f2f; background: #555; }
.lion { width: 20px; height: 23px; margin: -2px 3px 0 0; }
.mini { position: absolute; left: 25px; top: 20px; width: 13px; height: 13px; }
.big { left: 24px; top: 18px; width: 15px; height: 15px; }
.count { position: absolute; left: 26px; top: 19px; width: 21px; height: 17px; border: 1px solid #8c8c8c; border-radius: 9px; background: #282828; font: 700 12px/15px "Liberation Sans", sans-serif; text-align: center; }
.gh { width: 22px; height: 22px; border-radius: 11px; background: #7b2fa3; display: flex; align-items: center; justify-content: center; }
.gh svg { width: 16px; height: 16px; color: #f4eefa; }
.g-sd { font: 700 5px "Open Sans", sans-serif; fill: #333; }
.green { fill: #2c8a40; }
.tray { align-items: center; }
.t { width: 24px; height: 24px; }
.w { fill: none; stroke: #fff; stroke-width: 1.2; }
.pen { margin-left: 4px; }
.g-epic { font: 700 7px "Liberation Sans", sans-serif; fill: #eee; text-anchor: middle; }
.clock { width: 78px; display: flex; flex-direction: column; align-items: center; font-size: 12px; line-height: 18px; letter-spacing: -0.45px; }
.notif { position: relative; width: 44px; padding-left: 8px; }
.notif svg { width: 16px; height: 16px; }
.count-sm { position: absolute; left: 15px; top: 7px; width: 17px; height: 17px; border: 1px solid #999; border-radius: 9px; background: #444; font-size: 11px; line-height: 15px; text-align: center; letter-spacing: -0.5px; }
.peek { width: 1px; height: 40px; margin-right: 4px; background: #777; }
```
